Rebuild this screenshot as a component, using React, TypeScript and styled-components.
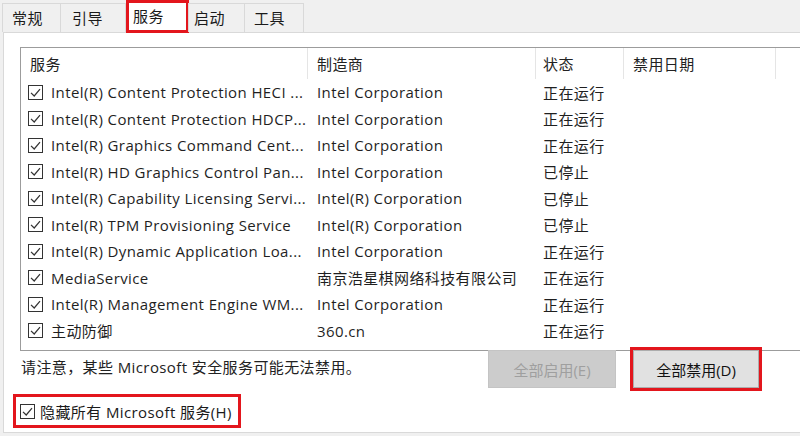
import React from 'react';
import styled, { createGlobalStyle } from 'styled-components';

const GlobalStyle = createGlobalStyle`
  html, body { margin: 0; padding: 0; }
  body {
    background: #f0f0f0;
    font-family: "Open Sans", "Noto Sans CJK SC", sans-serif;
    font-size: 15px;
    letter-spacing: 0.4px;
    color: #1f1f1f;
  }
`;

const RED = '#e3161d';

const Window = styled.div`
  width: 800px;
  height: 436px;
  overflow: hidden;
  background: #f0f0f0;
  display: flex;
  flex-direction: column;
`;

const TabStrip = styled.div`
  display: flex;
  align-items: flex-end;
  height: 32px;
  padding-left: 3px;
  flex-shrink: 0;
  position: relative;
  z-index: 1;
`;

const Tab = styled.div<{ $active?: boolean; $w: number; $pad: number }>`
  box-sizing: border-box;
  width: ${p => p.$w}px;
  height: ${p => (p.$active ? 33 : 29)}px;
  margin-bottom: ${p => (p.$active ? -1 : 0)}px;
  padding-left: ${p => p.$pad}px;
  display: flex;
  align-items: ${p => (p.$active ? 'flex-start' : 'center')};
  padding-top: ${p => (p.$active ? 3 : 0)}px;
  background: ${p => (p.$active ? '#ffffff' : '#f0f0f0')};
  border: ${p => (p.$active ? `3px solid ${RED}` : '1px solid #d9d9d9')};
  border-bottom: ${p => (p.$active ? `3px solid ${RED}` : 'none')};
  margin-left: ${p => (p.$active ? 0 : -1)}px;
  color: #1a1a1a;
  line-height: 20px;
`;

const Panel = styled.div`
  flex: 1;
  margin: 0 0 3px 3px;
  background: #ffffff;
  border-left: 1px solid #d9d9d9;
  border-top: 1px solid #d9d9d9;
  border-bottom: 1px solid #d9d9d9;
  padding: 14px 0 0 16px;
  display: flex;
  flex-direction: column;
  align-items: flex-start;
`;

const List = styled.div`
  box-sizing: border-box;
  width: 820px;
  height: 304px;
  border: 1px solid #9c9c9c;
  border-right: none;
  padding-bottom: 6px;
`;

const cols = '287px 228px 88px 152px 1fr';

const HeaderRow = styled.div`
  display: grid;
  grid-template-columns: ${cols};
  height: 31px;
`;

const HeaderCell = styled.div<{ $pad?: number }>`
  box-sizing: border-box;
  border-right: 1px solid #e5e5e5;
  padding-left: ${p => p.$pad ?? 9}px;
  display: flex;
  align-items: center;
  color: #222;
  &:last-child { border-right: none; }
`;

const Row = styled.div`
  display: grid;
  grid-template-columns: ${cols};
  height: 26.5px;
  align-items: center;
`;

const Cell = styled.div<{ $pad?: number }>`
  box-sizing: border-box;
  padding-left: ${p => p.$pad ?? 9}px;
  display: flex;
  align-items: center;
  gap: 8px;
  white-space: nowrap;
  overflow: hidden;
`;

const Box = styled.span`
  box-sizing: border-box;
  width: 15px;
  height: 15px;
  border: 1px solid #333333;
  background: #ffffff;
  display: inline-flex;
  align-items: center;
  justify-content: center;
  flex-shrink: 0;
`;

const Check = () => (
  <Box>
    <svg width="13" height="13" viewBox="0 0 13 13">
      <polyline points="2,6.8 5.2,10 11,3.2" fill="none" stroke="#333" strokeWidth="1.2" />
    </svg>
  </Box>
);

const Footer = styled.div`
  display: grid;
  grid-template-columns: 451px 128px 126px;
  column-gap: 17px;
  margin-top: -1px;
  align-items: start;
`;

const Note = styled.div`
  padding: 6px 0 0 1px;
  line-height: 22px;
  white-space: nowrap;
  color: #222;
`;

const Button = styled.div<{ $primary?: boolean }>`
  box-sizing: border-box;
  height: 38px;
  display: flex;
  align-items: center;
  justify-content: center;
  letter-spacing: 0;
  background: ${p => (p.$primary ? '#e1e1e1' : '#cccccc')};
  color: ${p => (p.$primary ? '#111111' : '#9f9f9f')};
  border: 1px solid ${p => (p.$primary ? '#adadad' : '#c4c4c4')};
  outline: ${p => (p.$primary ? `3px solid ${RED}` : 'none')};
`;

const HideRow = styled.div`
  box-sizing: border-box;
  margin: 6px 0 0 -7px;
  width: 228px;
  height: 34px;
  border: 3px solid ${RED};
  padding-left: 4px;
  display: flex;
  align-items: center;
  gap: 5px;
  white-space: nowrap;
  color: #1a1a1a;
`;

type Svc = { name: string; maker: string; status: string };

const services: Svc[] = [
  { name: 'Intel(R) Content Protection HECI ...', maker: 'Intel Corporation', status: '正在运行' },
  { name: 'Intel(R) Content Protection HDCP...', maker: 'Intel Corporation', status: '正在运行' },
  { name: 'Intel(R) Graphics Command Cent...', maker: 'Intel Corporation', status: '正在运行' },
  { name: 'Intel(R) HD Graphics Control Pan...', maker: 'Intel Corporation', status: '已停止' },
  { name: 'Intel(R) Capability Licensing Servi...', maker: 'Intel(R) Corporation', status: '已停止' },
  { name: 'Intel(R) TPM Provisioning Service', maker: 'Intel(R) Corporation', status: '已停止' },
  { name: 'Intel(R) Dynamic Application Loa...', maker: 'Intel Corporation', status: '正在运行' },
  { name: 'MediaService', maker: '南京浩星棋网络科技有限公司', status: '正在运行' },
  { name: 'Intel(R) Management Engine WM...', maker: 'Intel Corporation', status: '正在运行' },
  { name: '主动防御', maker: '360.cn', status: '正在运行' },
];

const tabs = [
  { label: '常规', w: 59, pad: 9 },
  { label: '引导', w: 66, pad: 11 },
  { label: '服务', w: 63, pad: 4, active: true },
  { label: '启动', w: 57, pad: 5 },
  { label: '工具', w: 60, pad: 9 },
];

export default function App() {
  return (
    <>
      <GlobalStyle />
      <Window>
        <TabStrip>
          {tabs.map(t => (
            <Tab key={t.label} $w={t.w} $pad={t.pad} $active={t.active}>
              {t.label}
            </Tab>
          ))}
        </TabStrip>
        <Panel>
          <List>
            <HeaderRow>
              <HeaderCell>服务</HeaderCell>
              <HeaderCell>制造商</HeaderCell>
              <HeaderCell $pad={7}>状态</HeaderCell>
              <HeaderCell>禁用日期</HeaderCell>
              <HeaderCell />
            </HeaderRow>
            {services.map(s => (
              <Row key={s.name}>
                <Cell $pad={7}>
                  <Check />
                  {s.name}
                </Cell>
                <Cell>{s.maker}</Cell>
                <Cell $pad={7}>{s.status}</Cell>
                <Cell />
                <Cell />
              </Row>
            ))}
          </List>
          <Footer>
            <Note>请注意，某些 Microsoft 安全服务可能无法禁用。</Note>
            <Button>全部启用(E)</Button>
            <Button $primary>全部禁用(D)</Button>
          </Footer>
          <HideRow>
            <Check />
            隐藏所有 Microsoft 服务(H)
          </HideRow>
        </Panel>
      </Window>
    </>
  );
}
